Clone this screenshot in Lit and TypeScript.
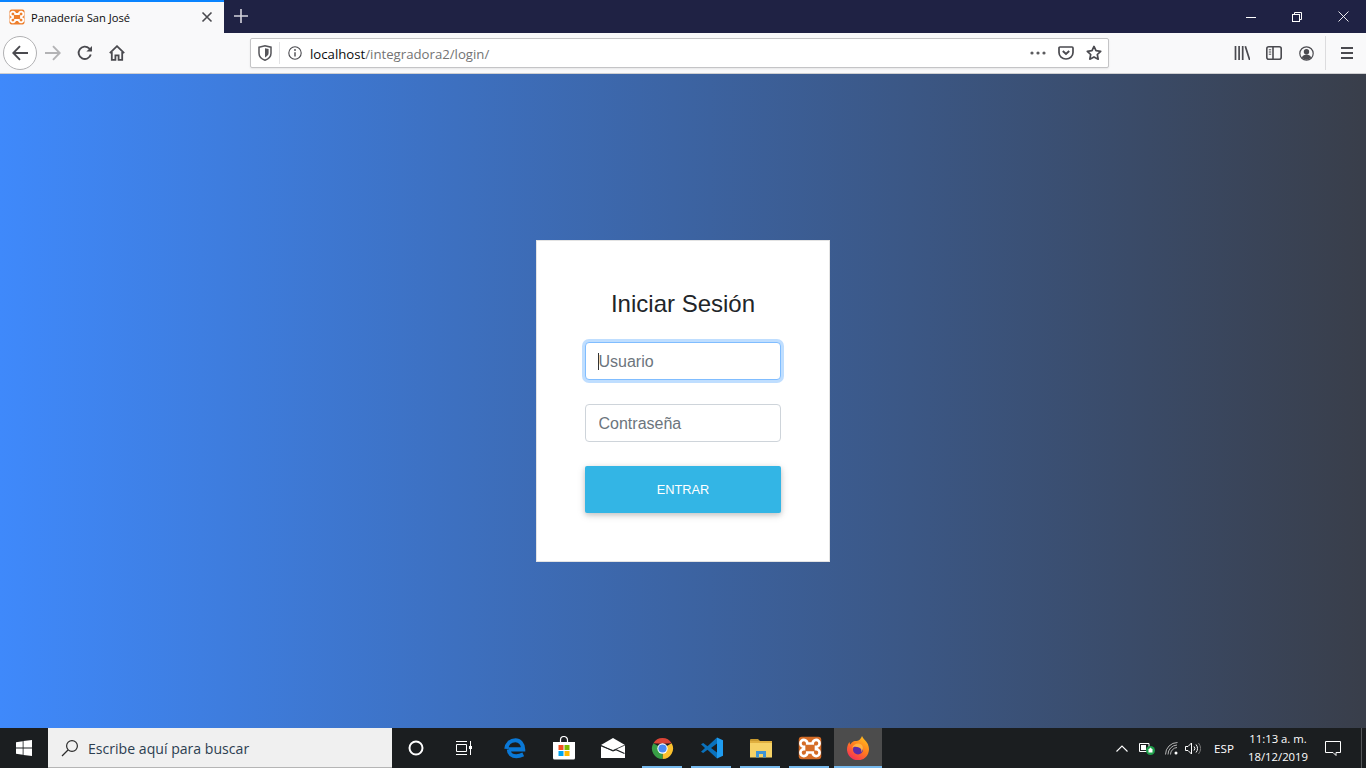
import { LitElement, html, css, svg } from "lit";
import { customElement } from "lit/decorators.js";

const xampp = (bg: string) => svg`<rect x="0.5" y="0.5" width="15" height="15" rx="2" fill="${bg}"/>
  <path d="M6.200 5H9.800A2.300 2.300 0 1 1 12 7.200V8.800A2.300 2.300 0 1 1 9.800 11H6.200A2.300 2.300 0 1 1 4 8.800V7.200A2.300 2.300 0 1 1 6.200 5Z" fill="none" stroke="#fff" stroke-width="1.800"/>`;

@customElement("app-root")
export class AppRoot extends LitElement {
  static styles = css`
    :host { display: flex; flex-direction: column; width: 100vw; height: 100vh; overflow: hidden; font-family: "Liberation Sans", Arial, sans-serif; }
    svg { display: block; }
    .tabbar { height: 33px; flex: none; display: flex; background: #1f2244; }
    .tab { width: 224px; box-sizing: border-box; background: #f9f9fa; border-top: 2px solid #0a84ff; display: flex; align-items: center; padding: 0 11px 1px 9px; font: 11.200px "Open Sans", "Noto Sans", sans-serif; color: #0c0c0d; }
    .tab .title { margin-left: 6px; flex: 1; white-space: nowrap; padding-top: 1px; }
    .newtab { width: 34px; display: flex; align-items: center; justify-content: center; padding-bottom: 1px; }
    .spacer { flex: 1; }
    .win { width: 46px; display: flex; align-items: center; justify-content: center; }
    .toolbar { height: 40px; flex: none; box-sizing: content-box; border-bottom: 1px solid #cfcfd1; background: #f9f9fa; display: flex; align-items: center; padding: 0 3px; }
    .tb { width: 32px; height: 32px; display: flex; align-items: center; justify-content: center; flex: none; }
    .tb.back { width: 34px; height: 34px; box-sizing: border-box; border: 1px solid #b1b1b3; border-radius: 50%; background: #fff; margin-top: -1px; }
    .urlbar { flex: 1; height: 30px; box-sizing: border-box; margin: 0 117px; background: #fff; border: 1px solid #c4c4c6; border-radius: 2px; display: flex; align-items: center; box-shadow: 0 1px 2px rgba(0,0,0,.08); }
    .shield { width: 28px; display: flex; justify-content: center; }
    .sep { width: 1px; height: 22px; background: #e3e3e5; }
    .info { width: 30px; display: flex; justify-content: center; }
    .url { flex: 1; font: 13.200px "Open Sans", "Noto Sans", sans-serif; color: #0c0c0d; white-space: nowrap; padding-top: 1px; }
    .url span { color: #737373; }
    .ua { width: 28px; display: flex; justify-content: center; }
    .vsep { width: 1px; height: 34px; background: #dcdcde; margin: 0 5px 0 3px; }
    .main { flex: 1; display: flex; align-items: center; justify-content: center; background: linear-gradient(to right, #3f89fb, #393e4a); }
    .card { width: 294px; box-sizing: border-box; background: #fff; border: 1px solid #e3e3e3; padding: 48px; display: flex; flex-direction: column; }
    h1 { margin: 0 0 24px; font-size: 24px; line-height: 29px; font-weight: 400; text-align: center; color: #212529; }
    .field { position: relative; margin-bottom: 24px; }
    input { display: block; width: 100%; height: 38px; box-sizing: border-box; padding: 7px 12px 5px 12.500px; border: 1px solid #ced4da; border-radius: 4px; font: 16px "Liberation Sans", Arial, sans-serif; background: #fff; outline: none; }
    input::placeholder { color: #6c757d; opacity: 1; }
    input.focus { border-color: #80bdff; box-shadow: 0 0 0 3px rgba(0,123,255,.25); }
    .caret { position: absolute; left: 13px; top: 11px; width: 1px; height: 17px; background: #333; }
    button { height: 47px; border: 0; border-radius: 2px; background: #33b5e5; color: #fff; font: 12.800px "Liberation Sans", Arial, sans-serif; text-transform: uppercase; padding: 0 0 1px; box-shadow: 0 2px 5px rgba(0,0,0,.16), 0 2px 10px rgba(0,0,0,.12); }
    .taskbar { height: 40px; flex: none; display: flex; background: #1b1e20; color: #fff; }
    .start { width: 48px; display: flex; align-items: center; justify-content: center; }
    .search { width: 344px; box-sizing: border-box; background: #f0f0f0; border-bottom: 1px solid #b5b5b5; display: flex; align-items: center; padding-left: 13px; font: 14.100px "Open Sans", "Noto Sans", sans-serif; color: #2c3e50; }
    .search span { margin-left: 9px; white-space: nowrap; padding-top: 1px; }
    .sys { width: 48px; display: flex; align-items: center; justify-content: center; }
    .tasks { display: flex; margin-left: 2px; }
    .task { width: 49px; position: relative; display: flex; align-items: center; justify-content: center; }
    .task.run::after { content: ""; position: absolute; left: 4px; right: 5px; bottom: 0; height: 2px; background: #76b9ed; }
    .task.first-run { margin-left: 1px; }
    .task.active { width: 48px; background: #4c4c4c; }
    .task.active::after { left: 0; right: 0; }
    .tray { margin-left: auto; display: flex; align-items: center; font: 11.600px "Open Sans", "Noto Sans", sans-serif; color: #fff; }
    .ti { display: flex; align-items: center; justify-content: center; height: 40px; flex: none; }
    .chev { width: 24px; } .ico { width: 25px; } .vol { width: 18px; }
    .lang { width: 40px; margin-left: 2px; }
    .clock { width: 72px; margin-left: -2px; text-align: center; line-height: 18px; white-space: nowrap; flex-direction: column; font-size: 11.300px; }
    .notif { width: 38px; }
    .desk { width: 1px; height: 40px; background: #55585a; margin: 0 4px 0 9px; }
  `;

  render() {
    return html`
      <div class="tabbar">
        <div class="tab">
          <svg width="16" height="16" viewBox="0 0 16 16">${xampp("#ee7f2d")}</svg>
          <span class="title">Panadería San José</span>
          <svg width="12" height="12" viewBox="0 0 12 12"><path d="M1.500 1.500l9 9M10.500 1.500l-9 9" stroke="#4a4a4f" stroke-width="1.600"/></svg>
        </div>
        <div class="newtab"><svg width="14" height="14" viewBox="0 0 14 14"><path d="M7 0v14M0 7h14" stroke="#d4d4dc" stroke-width="1.600"/></svg></div>
        <div class="spacer"></div>
        <div class="win"><svg width="10" height="10" viewBox="0 0 10 10"><path d="M0 5.500h10" stroke="#fff"/></svg></div>
        <div class="win"><svg width="10" height="10" viewBox="0 0 10 10" fill="none" stroke="#fff"><rect x=".5" y="2.500" width="7" height="7"/><path d="M2.500 2.500v-2h7v7h-2"/></svg></div>
        <div class="win"><svg width="11" height="11" viewBox="0 0 11 11"><path d="M.5.500l10 10M10.500.500l-10 10" stroke="#fff" stroke-width=".9"/></svg></div>
      </div>

      <div class="toolbar">
        <div class="tb back"><svg width="16" height="16" viewBox="0 0 16 16" fill="none" stroke="#4a4a4f" stroke-width="1.900"><path d="M16 8H1.500M8 1.200L1.300 8 8 14.800"/></svg></div>
        <div class="tb"><svg width="16" height="16" viewBox="0 0 16 16" fill="none" stroke="#b3b3b5" stroke-width="1.900"><path d="M0 8h14.500M8 1.200L14.700 8 8 14.800"/></svg></div>
        <div class="tb"><svg width="16" height="16" viewBox="0 0 16 16" fill="none" stroke="#4a4a4f" stroke-width="1.900"><path d="M13.800 9.600A6.200 6.200 0 1 1 12.200 3.400L14.600 5.600"/><path d="M15 1v5.600H9.400" stroke="none" fill="#4a4a4f"/></svg></div>
        <div class="tb"><svg width="16" height="16" viewBox="0 0 16 16" fill="none" stroke="#4a4a4f" stroke-width="1.800"><path d="M.8 8.200L8 1.200l7.200 7"/><path d="M2.800 7v7.800h3.600v-4.400h3.200v4.400h3.600V7"/></svg></div>
        <div class="urlbar">
          <div class="shield"><svg width="14" height="16" viewBox="0 0 14 16"><path d="M1 2.200L7 .8l6 1.400v6c0 3.400-2.800 5.800-6 7-3.200-1.200-6-3.600-6-7z" fill="none" stroke="#55555a" stroke-width="1.500"/><path d="M7 3.200l3.600.9v4c0 2-1.700 3.400-3.600 4.300z" fill="#55555a"/></svg></div>
          <div class="sep"></div>
          <div class="info"><svg width="14" height="14" viewBox="0 0 14 14"><circle cx="7" cy="7" r="6.200" fill="none" stroke="#4a4a4f" stroke-width="1.100"/><path d="M7 6.200v4.200" stroke="#4a4a4f" stroke-width="1.400"/><circle cx="7" cy="4" r=".9" fill="#4a4a4f"/></svg></div>
          <div class="url">localhost<span>/integradora2/login/</span></div>
          <div class="ua"><svg width="16" height="4" viewBox="0 0 16 4" fill="#5b5b5f"><circle cx="2" cy="2" r="1.600"/><circle cx="8" cy="2" r="1.600"/><circle cx="14" cy="2" r="1.600"/></svg></div>
          <div class="ua"><svg width="16" height="14" viewBox="0 0 16 14" fill="none" stroke="#4a4a4f" stroke-width="1.700"><path d="M2 1h12a1 1 0 0 1 1 1v4.500A7 6.500 0 0 1 1 6.500V2a1 1 0 0 1 1-1z"/><path d="M4.800 5L8 8l3.200-3" stroke-width="1.900"/></svg></div>
          <div class="ua"><svg width="16" height="16" viewBox="0 0 16 16" fill="none" stroke="#4a4a4f" stroke-width="1.700" stroke-linejoin="round"><path d="M8 1.400l2 4.300 4.700.6-3.400 3.200.9 4.700L8 11.900l-4.200 2.300.9-4.700L1.300 6.300 6 5.700z"/></svg></div>
        </div>
        <div class="tb"><svg width="16" height="14" viewBox="0 0 16 14" stroke="#4a4a4f" stroke-width="1.700"><path d="M1.500 0v14M5.100 0v14M8.700 0v14M11.300.2L15.700 14"/></svg></div>
        <div class="tb"><svg width="16" height="14" viewBox="0 0 16 14"><rect x=".8" y=".8" width="14.400" height="12.400" rx="2" fill="none" stroke="#4a4a4f" stroke-width="1.600"/><path d="M7 1v12" stroke="#4a4a4f" stroke-width="1.600"/><path d="M2.800 3.800h2.400M2.800 6h2.400M2.800 8.200h2.400" stroke="#4a4a4f"/></svg></div>
        <div class="tb"><svg width="15" height="15" viewBox="0 0 15 15"><circle cx="7.500" cy="7.500" r="6.700" fill="none" stroke="#4a4a4f" stroke-width="1.200"/><circle cx="7.500" cy="5.700" r="2.700" fill="#4a4a4f"/><path d="M2.800 11.500c1-2.200 2.800-3 4.700-3s3.700.8 4.700 3a6.200 6.200 0 0 1-9.400 0z" fill="#4a4a4f"/></svg></div>
        <div class="vsep"></div>
        <div class="tb"><svg width="14" height="14" viewBox="0 0 14 14" stroke="#4a4a4f" stroke-width="1.800"><path d="M1 2h12M1 7h12M1 12h12"/></svg></div>
      </div>

      <div class="main">
        <form class="card">
          <h1>Iniciar Sesión</h1>
          <div class="field"><input class="focus" placeholder="Usuario" /><span class="caret"></span></div>
          <div class="field"><input type="password" placeholder="Contraseña" /></div>
          <button type="button">Entrar</button>
        </form>
      </div>

      <div class="taskbar">
        <div class="start"><svg width="16" height="16" viewBox="0 0 16 16" fill="#fff"><path d="M0 2.300l6.700-1v6.300H0zM7.500 1.100L16 0v7.600H7.500zM0 8.400h6.700v6.300L0 13.700zM7.500 8.400H16V16l-8.500-1.100z"/></svg></div>
        <div class="search">
          <svg width="18" height="18" viewBox="0 0 18 18" fill="none" stroke="#2b2b2b" stroke-width="1.200"><circle cx="11" cy="7" r="5.400"/><path d="M7 11l-6 6"/></svg>
          <span>Escribe aquí para buscar</span>
        </div>
        <div class="sys"><svg width="16" height="16" viewBox="0 0 16 16"><circle cx="8" cy="8" r="6.500" fill="none" stroke="#fff" stroke-width="2"/></svg></div>
        <div class="sys"><svg width="16" height="16" viewBox="0 0 16 16" fill="none" stroke="#fff"><path d="M0 1.500h11M0 14.500h11M.5 4.500h10v7H.5zM14.500 1v14"/><rect x="13" y="6" width="3" height="3" fill="#fff" stroke="none"/></svg></div>
        <div class="tasks">
          <div class="task"><svg width="22" height="24" viewBox="0 0 24 24" fill="none" stroke="#0a78d6" stroke-width="4.400"><path d="M5 13.500H21C21 7.500 17 3.500 12.500 3.500 7 3.500 3 7.500 2.500 13"/><path d="M5.200 13.500C5.200 18 9 21 13.500 21 16.500 21 18.500 20.200 21 19"/></svg></div>
          <div class="task"><svg width="24" height="24" viewBox="0 0 24 24"><path d="M8.500 6V4a3.500 3.500 0 0 1 7 0v2" fill="none" stroke="#fff" stroke-width="1.200"/><path d="M1 6h22v16a1.500 1.500 0 0 1-1.500 1.500h-19A1.500 1.500 0 0 1 1 22z" fill="#fff"/><rect x="6.500" y="9" width="5" height="5" fill="#f25022"/><rect x="12.500" y="9" width="5" height="5" fill="#7fba00"/><rect x="6.500" y="15" width="5" height="5" fill="#00a4ef"/><rect x="12.500" y="15" width="5" height="5" fill="#ffb900"/></svg></div>
          <div class="task"><svg width="24" height="20" viewBox="0 0 24 20"><path d="M0 7L12 0l12 7v13H0z" fill="#fff"/><path d="M0 7.500L12 13l3-1.300L23.500 15.500" fill="none" stroke="#1b1e20" stroke-width="1.100"/><path d="M0 8l12 4.500L24 7" fill="none" stroke="#1b1e20" stroke-width=".8"/></svg></div>
          <div class="task run first-run"><svg width="23" height="23" viewBox="0 0 24 24"><path d="M2.470 6.500A11 11 0 0 1 21.530 6.500L12 7z" fill="#db4437"/><path d="M21.530 6.500A11 11 0 0 1 12 23L12 12z" fill="#fbc02d"/><path d="M12 23A11 11 0 0 1 2.470 6.500L12 12z" fill="#389e46"/><circle cx="12" cy="12" r="5.400" fill="#fff"/><circle cx="12" cy="12" r="4.300" fill="#4a8af4"/></svg></div>
          <div class="task run"><svg width="24" height="24" viewBox="0 0 24 24"><path d="M17 1.500L7.500 10.200 3.200 7 1 8.200 5 12l-4 3.800L3.200 17l4.300-3.200L17 22.500V16.500L11 12l6-4.500z" fill="#0a72bd"/><path d="M17 1.500L23 4.200V19.800L17 22.500z" fill="#1f9cf0"/></svg></div>
          <div class="task run"><svg width="22" height="20" viewBox="0 0 22 20"><path d="M0 2a1 1 0 0 1 1-1h7l2 2h-10z" fill="#c99a2e"/><path d="M0 3h22v16.500H0z" fill="#f6d266"/><path d="M0 3h22v2H0z" fill="#e0b040"/><path d="M6 19.500V13h10v6.500h-3V16H9v3.500z" fill="#3f95d6"/></svg></div>
          <div class="task run"><svg width="24" height="24" viewBox="0 0 16 16">${xampp("#d56c26")}</svg></div>
          <div class="task run active"><svg width="24" height="24" viewBox="0 0 24 24"><defs><linearGradient id="ff" x1="0.800" y1="0" x2="0.200" y2="1"><stop offset="0" stop-color="#ffc21f"/><stop offset=".5" stop-color="#ff7a1f"/><stop offset="1" stop-color="#f5275e"/></linearGradient></defs><path d="M16 0c1 3 4 4.500 5.500 7.500C23 10.500 23 13 23 13a11 11 0 1 1-21.500-3C2 8 3 6.500 3.500 6c0 1 .5 2 1 2.500C5.500 6.500 7.500 5 9 5c3 .2 5-.5 7-5z" fill="url(#ff)"/><circle cx="12" cy="13.500" r="5" fill="#5b2ca8"/><path d="M6 12c2-2 5-1 7-.5 2 .5 3 2.500 2 4.500 3-2 2.500-6.500-.5-8C11.500 6.500 7.500 8 6 12z" fill="#ffb340"/></svg></div>
        </div>
        <div class="tray">
          <div class="ti chev"><svg width="12" height="7" viewBox="0 0 12 7" fill="none" stroke="#fff" stroke-width="1.100"><path d="M.5 6.500L6 1l5.500 5.500"/></svg></div>
          <div class="ti ico"><svg width="16" height="14" viewBox="0 0 16 14"><path d="M.5 2.500h9.500v8H.5z" fill="none" stroke="#fff"/><rect x="2" y="4" width="5" height="5" fill="#fff"/><circle cx="11.500" cy="9.500" r="4.500" fill="#1e9e4a"/><path d="M11.500 6.500l2 2v3h-4v-3z" fill="#fff"/></svg></div>
          <div class="ti ico"><svg width="13" height="13" viewBox="0 0 13 13" fill="none" stroke="#b5b5b5"><path d="M.5 12.500A12 12 0 0 1 12.500.5M3 12.500A9.500 9.500 0 0 1 12 3M5.500 12.500A7 7 0 0 1 12 5.500"/><circle cx="11" cy="11" r="1.500" fill="#fff" stroke="none"/></svg></div>
          <div class="ti vol"><svg width="16" height="13" viewBox="0 0 16 13" fill="none" stroke="#fff"><path d="M.5 4.500h2.500L6.500 1v11L3 8.500H.5z"/><path d="M9 4.500a3 3 0 0 1 0 4M11 2.500a6 6 0 0 1 0 8"/><path d="M13.500 1a9 9 0 0 1 0 11" stroke="#777"/></svg></div>
          <div class="ti lang">ESP</div>
          <div class="ti clock"><div>11:13 a. m.</div><div>18/12/2019</div></div>
          <div class="ti notif"><svg width="16" height="15" viewBox="0 0 16 15" fill="none" stroke="#fff"><path d="M.5.500h15v11h-4.500v3l-3-3H.5z"/></svg></div>
          <div class="desk"></div>
        </div>
      </div>
    `;
  }
}
